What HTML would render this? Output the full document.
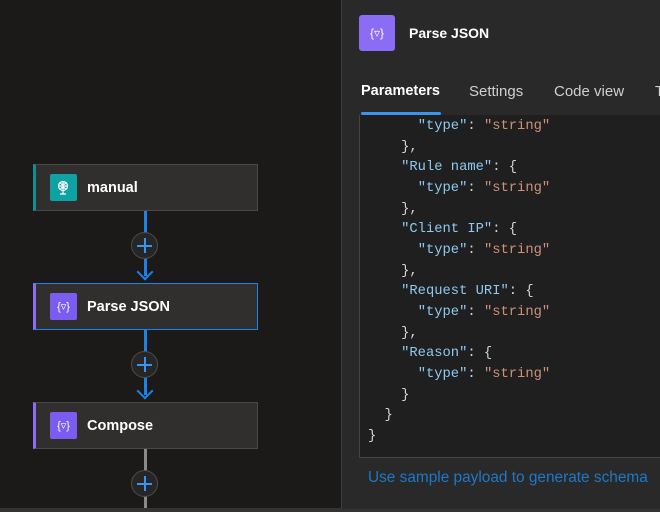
<!DOCTYPE html>
<html><head><meta charset="utf-8"><style>
*{margin:0;padding:0;box-sizing:border-box}
body{width:660px;height:512px;background:#1b1a19;position:relative;overflow:hidden;font-family:"Liberation Sans",sans-serif}
.card{position:absolute;left:33px;width:225px;height:47px;background:#302f2e;border:1px solid #4a4948;border-left:3px solid #8b6cf5}
.card .ic{position:absolute;left:14px;top:9px;width:27px;height:27px;border-radius:2px;background:#7b5cf0;display:flex;align-items:center;justify-content:center}
.card .t{position:absolute;left:51px;top:15px;color:#fff;font-size:14.5px;font-weight:bold}
.line{position:absolute;left:144px;width:3px;background:#1a82e8}
.plus{position:absolute;width:27px;height:27px;border-radius:50%;background:#262626;border:1px solid #4d4d4d;left:131px}
.plus:before{content:"";position:absolute;left:5px;top:12px;width:15px;height:2px;background:#3a95f0}
.plus:after{content:"";position:absolute;left:12px;top:5px;width:2px;height:15px;background:#3a95f0}
.arrow{position:absolute;left:139px;width:12px;height:12px;border-right:2px solid #1a82e8;border-bottom:2px solid #1a82e8;transform:rotate(45deg)}
.panel{position:absolute;left:341px;top:0;width:319px;height:509px;background:#292929;border-left:1px solid #3e3e3e}
.code{position:absolute;left:17px;top:115px;width:310px;height:343px;background:#1f1f1f;border:1px solid #444;border-top:none;font-family:"Liberation Mono",monospace;font-size:13.8px;line-height:20.65px;color:#d4d4d4;white-space:pre;padding:2px 0 0 8px}
.k{color:#8fc9f0}.s{color:#ce9178}
</style></head><body>
<div class="line" style="top:210px;height:66px"></div>
<div class="arrow" style="top:266px"></div>
<div class="line" style="top:329px;height:66px"></div>
<div class="arrow" style="top:385px"></div>
<div class="line" style="top:448px;height:64px;background:#8a8a8a"></div>
<div class="plus" style="top:232px"></div>
<div class="plus" style="top:351px"></div>
<div class="plus" style="top:470px"></div>

<div class="card" style="top:164px;border-left-color:#0d8f95"><div class="ic" style="background:#0fa2a4"><svg width="16" height="16" viewBox="0 0 16 16" fill="none" stroke="#fff" stroke-width="1.2"><circle cx="7" cy="6" r="4.5"/><path d="M2.5 6h9M7 1.5v9M4.5 3c1 2 4 2 5 0M4.5 9c1-2 4-2 5 0M7 10.5v3M4 14h6"/></svg></div><div class="t">manual</div></div>
<div class="card" style="top:283px;border-color:#1a82e8;border-left-color:#8b6cf5"><div class="ic"><span style="color:#fff;font-size:11px">{▿}</span></div><div class="t">Parse JSON</div></div>
<div class="card" style="top:402px"><div class="ic"><span style="color:#fff;font-size:11px">{▿}</span></div><div class="t">Compose</div></div>

<div style="position:absolute;left:0;top:508px;width:660px;height:4px;background:#333"></div>
<div class="panel">
<div style="position:absolute;left:17px;top:15px;width:36px;height:36px;border-radius:3px;background:#8b6cf5;color:#fff;font-size:12px;display:flex;align-items:center;justify-content:center">{▿}</div>
<div style="position:absolute;left:67px;top:25px;color:#fff;font-size:14px;font-weight:bold">Parse JSON</div>
<div style="position:absolute;left:19px;top:83px;color:#fff;font-size:14.5px;font-weight:bold">Parameters</div>
<div style="position:absolute;left:127px;top:83px;color:#d0d0d0;font-size:15px">Settings</div>
<div style="position:absolute;left:212px;top:83px;color:#d0d0d0;font-size:15px">Code view</div>
<div style="position:absolute;left:313px;top:83px;color:#d0d0d0;font-size:15px">T</div>
<div style="position:absolute;left:19px;top:112px;width:80px;height:3px;background:#3a95f0;border-radius:2px"></div>
<div class="code">      <span class="k">"type"</span>: <span class="s">"string"</span>
    },
    <span class="k">"Rule name"</span>: {
      <span class="k">"type"</span>: <span class="s">"string"</span>
    },
    <span class="k">"Client IP"</span>: {
      <span class="k">"type"</span>: <span class="s">"string"</span>
    },
    <span class="k">"Request URI"</span>: {
      <span class="k">"type"</span>: <span class="s">"string"</span>
    },
    <span class="k">"Reason"</span>: {
      <span class="k">"type"</span>: <span class="s">"string"</span>
    }
  }
}</div>
<div style="position:absolute;left:26px;top:469px;color:#1e78c8;font-size:15.4px">Use sample payload to generate schema</div>
</div>
</body></html>
